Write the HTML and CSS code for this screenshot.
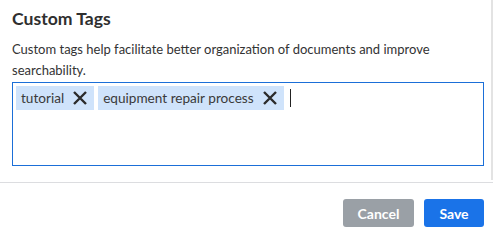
FILE: index.html
```html
<!DOCTYPE html>
<html>
<head>
<meta charset="utf-8">
<link rel="stylesheet" href="styles.css">
</head>
<body>
<div class="dialog">
  <div class="content">
    <h2 class="title">Custom Tags</h2>
    <p class="desc">Custom tags help facilitate better organization of documents and improve searchability.</p>
    <div class="tag-box">
      <span class="tag">tutorial<svg class="x" viewBox="0 0 14 14"><path d="M1 1L13 13M13 1L1 13"/></svg></span>
      <span class="tag">equipment repair process<svg class="x" viewBox="0 0 14 14"><path d="M1 1L13 13M13 1L1 13"/></svg></span>
      <span class="caret"></span>
    </div>
  </div>
  <div class="footer">
    <button class="btn cancel">Cancel</button>
    <button class="btn save">Save</button>
  </div>
</div>
</body>
</html>
```
FILE: styles.css
```css
html, body {
  margin: 0;
  padding: 0;
  background: #fff;
}
body {
  font-family: Lato, "Noto Sans", sans-serif;
  color: #333;
}
.dialog {
  width: 493px;
  height: 237px;
  display: flex;
  flex-direction: column;
}
.content {
  height: 180px;
  padding: 8px 7px 0 12px;
  border-right: 2px solid #e3e3e3;
  box-sizing: border-box;
  width: 493px;
  flex: none;
}
.title {
  margin: 0;
  font-size: 17.6px;
  line-height: 22px;
  font-weight: 700;
  color: #2f2f2f;
}
.desc {
  margin: 9px 0 0;
  font-size: 13px;
  line-height: 21px;
  color: #333;
}
.tag-box {
  margin-top: 1px;
  height: 84px;
  box-sizing: border-box;
  border: 1px solid #1b6fd8;
  padding: 3px;
  display: flex;
  align-items: flex-start;
  gap: 4px;
}
.tag {
  display: inline-flex;
  align-items: center;
  height: 24px;
  padding: 0 7px 0 5px;
  gap: 9px;
  background: #cfe3fb;
  font-size: 13.6px;
  color: #3a3a3a;
}
.x {
  width: 14px;
  height: 14px;
  stroke: #2b2b2b;
  stroke-width: 2.4;
  fill: none;
}
.caret {
  width: 1px;
  height: 18px;
  background: #222;
  margin: 3px 0 0 2px;
}
.footer {
  margin-top: 2px;
  border-top: 1px solid #dcdde0;
  flex: 1;
  display: flex;
  justify-content: flex-end;
  align-items: flex-start;
  padding: 16px 9px 0 0;
  gap: 10px;
}
.btn {
  height: 28px;
  border: none;
  border-radius: 3px;
  color: #fff;
  font-family: Lato, "Noto Sans", sans-serif;
  font-weight: 700;
  font-size: 14px;
  padding: 0;
}
.cancel {
  width: 71px;
  background: #9aa0a6;
}
.save {
  width: 60px;
  background: #1a73e8;
}
```
